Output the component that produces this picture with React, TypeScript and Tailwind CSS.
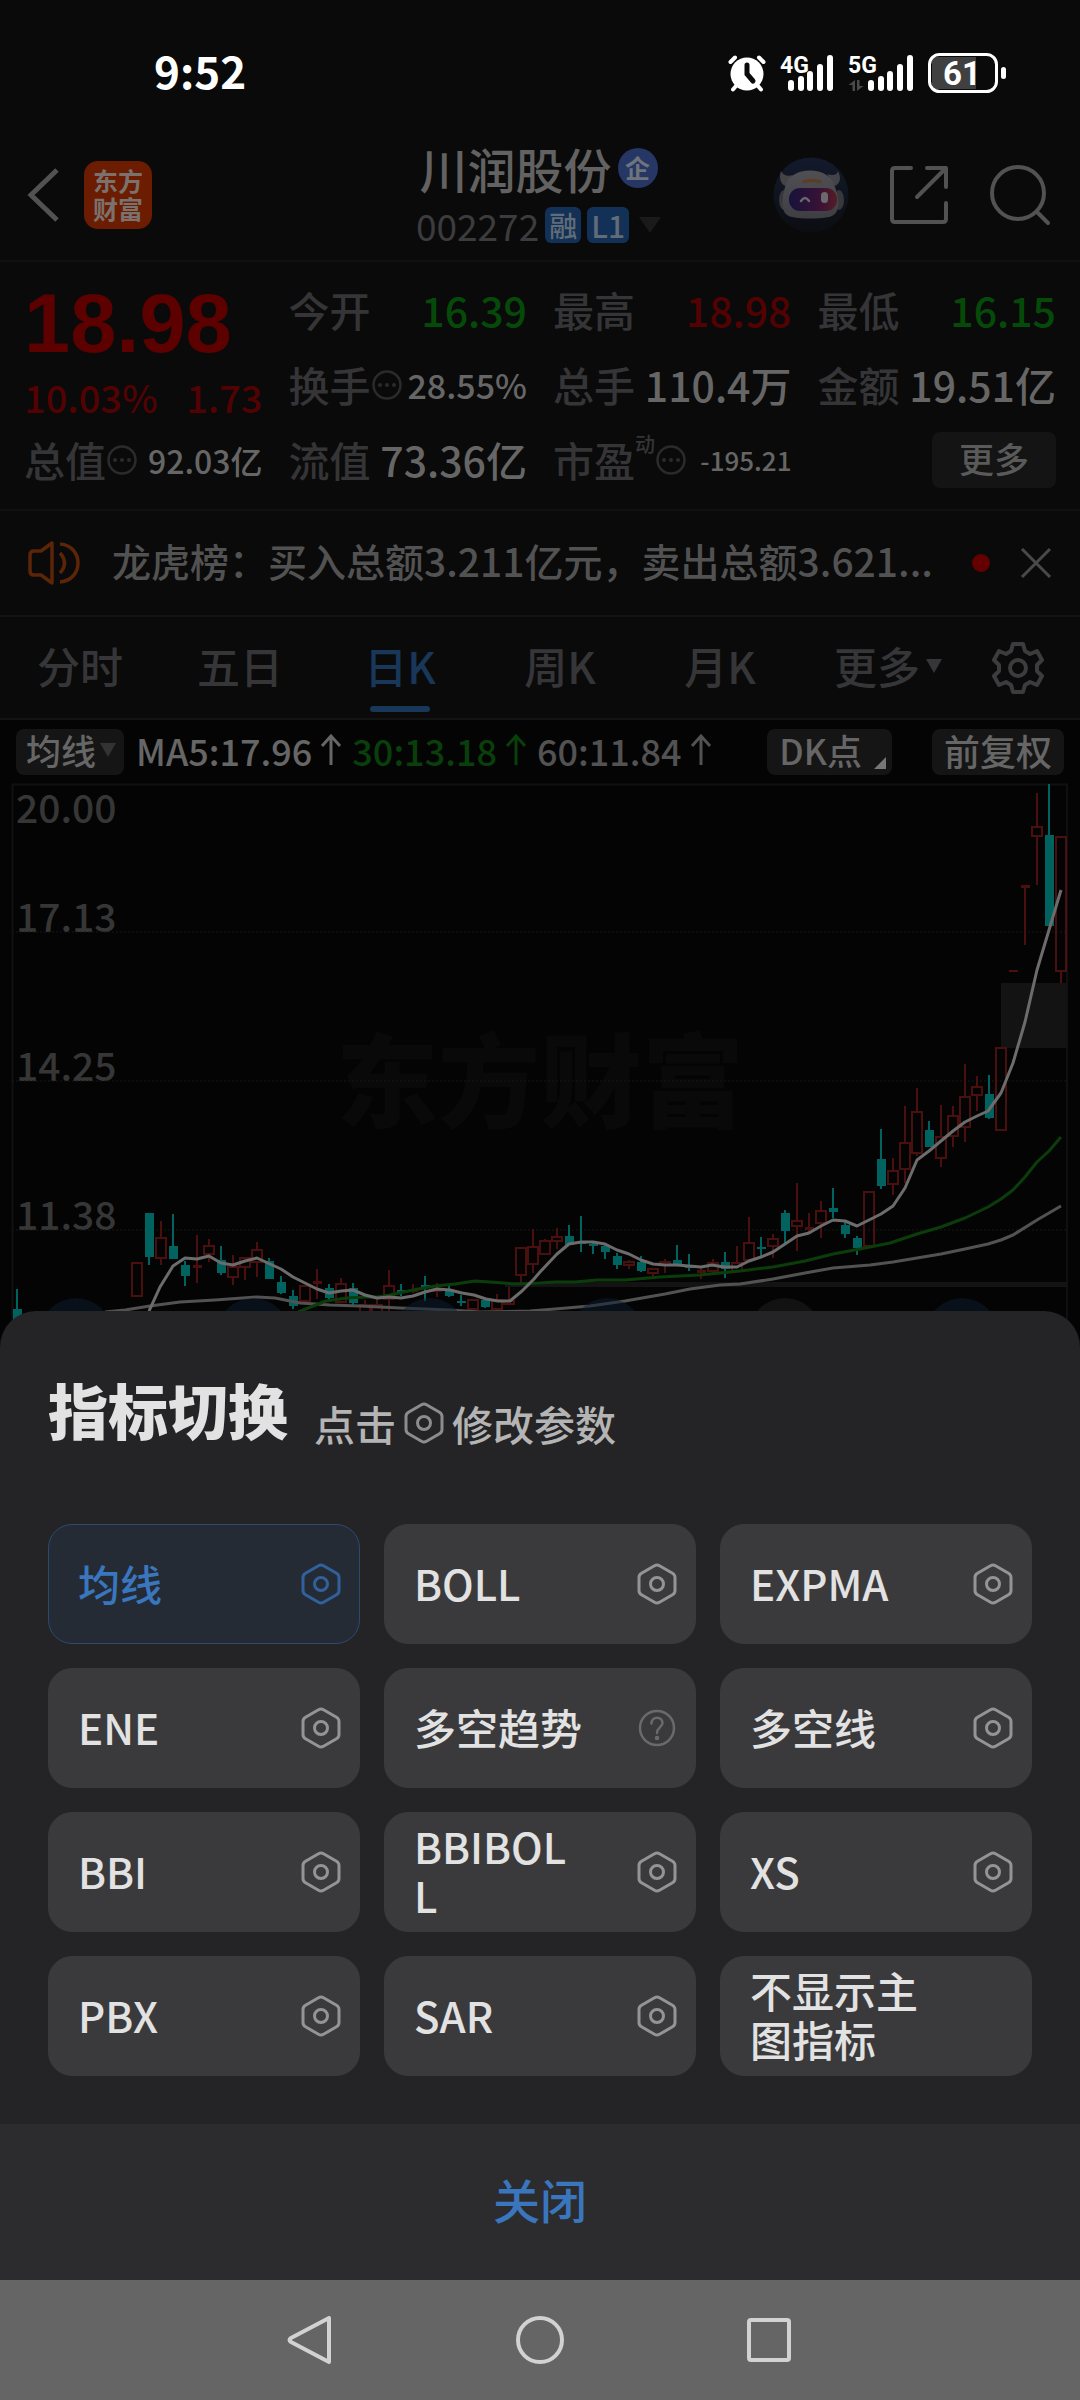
import React, { useState } from 'react';

type Candle = [number, 'up' | 'down', number, number, number, number];

interface Indicator {
  name: string;
  icon?: 'setting' | 'help';
}

// [index, direction, high, body top, body bottom, low]
const candles: Candle[] = [
  [0, 'down', 509, 529, 545, 545],
  [10, 'up', 482, 482, 517, 517],
  [11, 'down', 433, 433, 477, 485],
  [12, 'up', 441, 457, 479, 485],
  [13, 'down', 434, 466, 479, 479],
  [14, 'down', 481, 485, 496, 506],
  [15, 'up', 455, 485, 488, 503],
  [16, 'up', 459, 465, 475, 482],
  [17, 'down', 466, 480, 493, 495],
  [18, 'up', 475, 486, 498, 505],
  [19, 'up', 477, 477, 488, 500],
  [20, 'up', 462, 469, 483, 497],
  [21, 'down', 478, 481, 499, 499],
  [22, 'down', 496, 502, 513, 514],
  [23, 'down', 510, 516, 526, 529],
  [24, 'up', 505, 505, 522, 523],
  [25, 'up', 489, 501, 504, 519],
  [26, 'down', 504, 508, 518, 520],
  [27, 'up', 498, 503, 523, 523],
  [28, 'down', 503, 508, 523, 525],
  [29, 'up', 520, 524, 535, 535],
  [30, 'up', 518, 524, 535, 535],
  [31, 'up', 490, 505, 520, 532],
  [32, 'down', 504, 510, 512, 516],
  [33, 'up', 504, 509, 512, 513],
  [34, 'down', 496, 505, 507, 521],
  [35, 'up', 503, 510, 512, 517],
  [36, 'down', 505, 511, 516, 517],
  [37, 'down', 515, 521, 523, 526],
  [38, 'up', 519, 519, 530, 530],
  [39, 'down', 519, 520, 527, 528],
  [40, 'up', 514, 519, 530, 531],
  [41, 'up', 507, 520, 525, 525],
  [42, 'up', 467, 467, 496, 503],
  [43, 'up', 449, 466, 485, 493],
  [44, 'up', 459, 460, 475, 475],
  [45, 'up', 448, 456, 462, 469],
  [46, 'down', 445, 456, 465, 465],
  [47, 'down', 436, 461, 464, 472],
  [48, 'down', 462, 464, 466, 474],
  [49, 'down', 464, 466, 472, 479],
  [50, 'down', 473, 476, 485, 489],
  [51, 'up', 480, 481, 486, 489],
  [52, 'down', 476, 482, 491, 492],
  [53, 'up', 488, 488, 494, 496],
  [54, 'up', 479, 481, 486, 493],
  [55, 'down', 465, 480, 485, 486],
  [56, 'down', 474, 486, 488, 491],
  [57, 'up', 488, 490, 493, 499],
  [58, 'up', 479, 482, 492, 493],
  [59, 'down', 472, 482, 489, 498],
  [60, 'up', 466, 482, 492, 492],
  [61, 'up', 437, 462, 481, 481],
  [62, 'down', 457, 467, 469, 476],
  [63, 'up', 454, 458, 467, 478],
  [64, 'down', 430, 433, 451, 463],
  [65, 'up', 403, 440, 447, 471],
  [66, 'up', 433, 447, 450, 452],
  [67, 'up', 421, 430, 444, 458],
  [68, 'down', 408, 428, 432, 438],
  [69, 'down', 441, 445, 454, 458],
  [70, 'down', 456, 458, 468, 475],
  [71, 'up', 411, 411, 467, 467],
  [72, 'down', 349, 379, 406, 409],
  [73, 'up', 378, 390, 405, 415],
  [74, 'up', 326, 362, 390, 403],
  [75, 'up', 308, 331, 374, 376],
  [76, 'down', 341, 350, 367, 367],
  [77, 'up', 325, 356, 379, 387],
  [78, 'up', 326, 335, 357, 367],
  [79, 'up', 284, 316, 348, 362],
  [80, 'up', 296, 306, 316, 331],
  [81, 'down', 295, 314, 338, 339],
  [82, 'up', 267, 267, 351, 351],
  [83, 'up', 190, 190, 192, 192],
  [84, 'up', 105, 105, 108, 165],
  [85, 'up', 13, 46, 57, 105],
  [86, 'down', 4, 55, 146, 146],
  [87, 'up', 56, 56, 192, 203],
];

const ma5 =
  '149,531 160,507 173,486 185,478 197,479 209,476 221,483 233,485 245,481 257,478 270,484 281,489 293,497 305,503 317,509 329,513 341,511 353,510 365,515 377,518 389,517 401,518 413,516 425,512 437,509 450,510 462,513 474,515 486,519 498,521 510,521 522,511 534,499 540,492 557,474 569,464 581,462 593,462 605,464 617,470 629,474 641,480 653,484 665,485 677,485 689,486 701,487 712,485 724,487 737,487 749,481 761,477 773,472 785,464 797,456 809,453 821,446 833,440 845,441 857,446 869,440 881,434 893,426 905,408 917,380 929,371 941,361 953,351 965,342 977,336 988,331 1001,313 1013,283 1025,242 1037,190 1049,150 1061,110';
const ma30 =
  '298,532 326,521 347,518 365,517 377,517 390,515 413,510 435,506 455,504 475,501 490,502 515,504 540,503 555,502 575,502 597,500 625,500 660,497 700,495 740,491 773,487 805,481 833,474 860,469 890,463 917,454 941,447 965,438 988,427 1001,419 1013,410 1025,397 1037,382 1049,371 1061,357';
const ma60 =
  '105,532 125,530 150,526 180,522 215,520 257,517 275,518 300,523 330,525 360,526 400,528 450,530 480,532 530,531 555,529 590,526 625,521 665,514 690,509 720,505 740,504 773,499 805,493 833,488 870,485 893,482 917,478 941,474 965,469 988,464 1001,460 1013,455 1037,440 1061,426';

const gridLines = [
  { y: 152, label: '17.13' },
  { y: 301, label: '14.25' },
  { y: 450, label: '11.38' },
];

const markers = [76, 253, 430, 607, 785, 962];

const tabs = ['分时', '五日', '日K', '周K', '月K', '更多'];

const indicators: Indicator[] = [
  { name: '均线', icon: 'setting' },
  { name: 'BOLL', icon: 'setting' },
  { name: 'EXPMA', icon: 'setting' },
  { name: 'ENE', icon: 'setting' },
  { name: '多空趋势', icon: 'help' },
  { name: '多空线', icon: 'setting' },
  { name: 'BBI', icon: 'setting' },
  { name: 'BBIBOLL', icon: 'setting' },
  { name: 'XS', icon: 'setting' },
  { name: 'PBX', icon: 'setting' },
  { name: 'SAR', icon: 'setting' },
  { name: '不显示主图指标' },
];

const HexIcon = ({ className = '' }: { className?: string }) => (
  <svg viewBox="0 0 40 42" className={`h-[42px] w-10 shrink-0 ${className}`} fill="none" stroke="currentColor" strokeWidth="3">
    <path d="M17.5 2.7 Q20 1.3 22.5 2.7 L35.5 10.2 Q38 11.7 38 14.5 V27.5 Q38 30.3 35.5 31.8 L22.5 39.3 Q20 40.7 17.5 39.3 L4.5 31.8 Q2 30.3 2 27.5 V14.5 Q2 11.7 4.5 10.2 Z" />
    <circle cx="20" cy="21" r="6.5" />
  </svg>
);

const HelpIcon = () => (
  <svg viewBox="0 0 40 40" className="h-10 w-10 shrink-0 text-[#6a6a6b]" fill="none" stroke="currentColor" strokeWidth="2.5" strokeLinecap="round">
    <circle cx="20" cy="20" r="17" />
    <path d="M14.5 15.5 C14.5 8 25.5 8 25.5 15 C25.5 19 20 19.5 20 25" />
    <circle cx="20" cy="30" r="1" fill="currentColor" />
  </svg>
);

const DotsIcon = () => (
  <svg viewBox="0 0 32 32" className="h-8 w-8 shrink-0 text-[#2b2b2c]" fill="none" stroke="currentColor" strokeWidth="2.5">
    <circle cx="16" cy="16" r="13.5" />
    <g fill="currentColor" stroke="none">
      <circle cx="9" cy="16" r="2" />
      <circle cx="16" cy="16" r="2" />
      <circle cx="23" cy="16" r="2" />
    </g>
  </svg>
);

const SignalBars = ({ x }: { x: number }) => (
  <g transform={`translate(${x} 0)`}>
    <rect x="0" y="26" width="6" height="11" rx="3" />
    <rect x="10" y="22" width="6" height="15" rx="3" />
    <rect x="19" y="17" width="6" height="20" rx="3" />
    <rect x="29" y="10" width="6" height="27" rx="3" />
    <rect x="39" y="1" width="6" height="36" rx="3" />
  </g>
);

const StatusBar = () => (
  <div className="flex h-[130px] items-center justify-between pt-4 pr-[74px] pl-[154px] text-white">
    <span className="pb-1.5 text-[44px] leading-none font-bold">9:52</span>
    <div className="flex items-center gap-3.5">
      <svg viewBox="0 0 38 38" className="h-[38px] w-[38px]" fill="none" stroke="#fff" strokeWidth="5" strokeLinecap="round">
        <circle cx="19" cy="20" r="16.5" fill="#fff" stroke="none" />
        <path d="M2.5 8 L7 3.5 M35.5 8 L31 3.5" strokeWidth="4" />
        <path d="M8 32 L5 35.5 M30 32 L33 35.5" strokeWidth="4" />
        <path d="M19 11 V20 L25 27" stroke="#0a0a0a" />
      </svg>
      <svg viewBox="0 0 54 38" className="h-[38px] w-[54px] overflow-visible" fill="#fff">
        <text x="0" y="19" fontSize="23" fontWeight="700" fontFamily="Roboto">
          4G
        </text>
        <SignalBars x={8} />
      </svg>
      <svg viewBox="0 0 66 38" className="h-[38px] w-[66px] overflow-visible" fill="#fff">
        <text x="0" y="19" fontSize="23" fontWeight="700" fontFamily="Roboto">
          5G
        </text>
        <g fill="#4a4a4a">
          <path d="M7 26 V37 H4.5 V31 H0.5 Z" />
          <path d="M9 37 V26 H11.5 V32 H15.5 Z" />
        </g>
        <SignalBars x={20} />
      </svg>
      <svg viewBox="0 0 78 40" className="h-10 w-[78px] overflow-visible" fill="none">
        <rect x="4" y="4" width="44" height="32" fill="#404040" />
        <rect x="1.5" y="1.5" width="67" height="37" rx="10" stroke="#fff" strokeWidth="3" />
        <rect x="73" y="14" width="5" height="12" rx="2.5" fill="#fff" />
        <text x="34" y="32" fill="#fff" fontSize="33" fontWeight="700" textAnchor="middle" fontFamily="Roboto">
          61
        </text>
      </svg>
    </div>
  </div>
);

const Header = () => (
  <header className="flex h-[132px] items-center justify-between border-b-2 border-[#101010] pr-[29px] pl-[26px]">
    <div className="flex flex-1 items-center gap-6">
      <button aria-label="返回">
        <svg viewBox="0 0 34 56" className="h-14 w-[34px]" fill="none" stroke="#525252" strokeWidth="5">
          <path d="M31 3 L5 28 L31 53" />
        </svg>
      </button>
      <div className="flex h-[68px] w-[68px] items-center justify-center rounded-[14px] bg-[#6c1c00] pb-0.5 text-[25px] leading-[28px] font-bold text-[#7b716d]">
        <span className="w-[50px] break-all">东方财富</span>
      </div>
    </div>
    <div className="flex flex-col items-center">
      <h1 className="flex items-center gap-1.5 text-[48px] leading-[60px] font-medium text-[#626262]">
        川润股份
        <span className="flex h-10 w-10 items-center justify-center rounded-full bg-[#273765] pb-0.5 text-[25px] leading-none font-bold text-[#6f747c]">企</span>
      </h1>
      <div className="flex items-center gap-1.5 text-[37px] leading-[54px] text-[#3c3c3e]">
        002272
        <span className="rounded-md bg-[#133056] px-1 text-[28px] leading-[36px] font-medium text-[#616c79]">融</span>
        <span className="rounded-md bg-[#133056] px-1 text-[30px] leading-[36px] font-medium text-[#616c79]">L1</span>
        <svg viewBox="0 0 22 16" className="ml-1 h-4 w-[22px]">
          <path d="M0 0 H22 L11 16 Z" fill="#1a1a1a" />
        </svg>
      </div>
    </div>
    <div className="flex flex-1 items-center justify-end gap-10">
      <button aria-label="智能助手">
        <svg viewBox="0 0 76 76" className="h-[76px] w-[76px]">
          <defs>
            <linearGradient id="halo" x1="0" y1="0" x2="0" y2="1">
              <stop offset="0" stopColor="#131a2c" />
              <stop offset="1" stopColor="#0b0d11" />
            </linearGradient>
            <linearGradient id="visor" x1="0" y1="0" x2="1" y2="0">
              <stop offset="0" stopColor="#17133c" />
              <stop offset="0.6" stopColor="#371136" />
              <stop offset="1" stopColor="#551c26" />
            </linearGradient>
            <linearGradient id="shell" x1="0" y1="0" x2="0" y2="1">
              <stop offset="0" stopColor="#505054" />
              <stop offset="1" stopColor="#3e3e43" />
            </linearGradient>
          </defs>
          <circle cx="38" cy="38" r="37.5" fill="url(#halo)" />
          <path d="M8 14 C6 20 7 26 12 29 L20 18 C14 20 10 18 8 14 Z M65 14 C68 20 68 26 62 29 L54 17 C60 19 64 18 65 14 Z" fill="#434348" />
          <ellipse cx="11" cy="43" rx="5" ry="10" fill="#37373c" />
          <ellipse cx="66" cy="43" rx="5" ry="10" fill="#37373c" />
          <path d="M12 30 C16 8 58 8 62 30 C68 46 66 58 56 60 C44 62 30 62 19 60 C8 58 8 46 12 30 Z" fill="url(#shell)" />
          <rect x="16" y="31" width="48" height="23" rx="11" fill="url(#visor)" />
          <path d="M30 25 Q38 22 48 25" stroke="#5d3c22" strokeWidth="3" fill="none" />
          <path d="M28 44 Q32 38 36 44" stroke="#6a6a6a" strokeWidth="2.5" fill="none" strokeLinecap="round" />
          <rect x="48" y="35" width="7" height="11" rx="3.5" fill="#6a6a6e" />
        </svg>
      </button>
      <button aria-label="分享">
        <svg viewBox="0 0 60 60" className="h-[60px] w-[60px]" fill="none" stroke="#525252" strokeWidth="4" strokeLinecap="round" strokeLinejoin="round">
          <path d="M22 3 H6 Q3 3 3 6 V54 Q3 57 6 57 H54 Q57 57 57 54 V38" />
          <path d="M38 3 H57 V22 M56 4 L28 32" />
        </svg>
      </button>
      <button aria-label="搜索">
        <svg viewBox="0 0 62 62" className="h-[62px] w-[62px]" fill="none" stroke="#525252" strokeWidth="4" strokeLinecap="round">
          <circle cx="29" cy="29" r="26" />
          <path d="M48 48 L59 59" />
        </svg>
      </button>
    </div>
  </header>
);

interface QuoteCellProps {
  label: string;
  value: string;
  valueClass?: string;
  dots?: boolean;
  sup?: string;
}

const QuoteCell: React.FC<QuoteCellProps> = ({ label, value, valueClass = 'text-[41px] text-[#666]', dots, sup }) => (
  <div className="flex h-[75px] items-center justify-between whitespace-nowrap">
    <div className="flex items-center text-[41px] text-[#353537]">
      {label}
      {sup && <sup className="-top-4 text-[20px]">{sup}</sup>}
      {dots && <DotsIcon />}
    </div>
    <span className={valueClass}>{value}</span>
  </div>
);

const Quote = () => (
  <section className="grid grid-cols-4 gap-x-[26px] border-b-2 border-[#101010] px-6 pt-2.5 pb-3 leading-none font-medium">
    <div className="row-span-2 flex flex-col justify-between pt-2.5 pb-1.5">
      <strong className="font-['Liberation_Sans',sans-serif] text-[83px] font-bold text-[#5c0000]">18.98</strong>
      <div className="flex justify-between text-[38px] text-[#520202]">
        <span>10.03%</span>
        <span>1.73</span>
      </div>
    </div>
    <QuoteCell label="今开" value="16.39" valueClass="text-[41px] text-[#064a0a]" />
    <QuoteCell label="最高" value="18.98" valueClass="text-[41px] text-[#520202]" />
    <QuoteCell label="最低" value="16.15" valueClass="text-[41px] text-[#064a0a]" />
    <QuoteCell label="换手" value="28.55%" valueClass="text-[34px] text-[#666]" dots />
    <QuoteCell label="总手" value="110.4万" />
    <QuoteCell label="金额" value="19.51亿" />
    <QuoteCell label="总值" value="92.03亿" valueClass="text-[32px] text-[#666]" dots />
    <QuoteCell label="流值" value="73.36亿" />
    <QuoteCell label="市盈" value="-195.21" valueClass="text-[26px] text-[#666]" sup="动" dots />
    <div className="flex items-center justify-end">
      <button className="h-14 w-[124px] rounded-lg bg-[#141414] pb-1 text-[35px] text-[#5a5a5a]">更多</button>
    </div>
  </section>
);

const Notice = () => (
  <section className="flex h-[106px] items-center border-b-2 border-[#131313] px-[28px]">
    <svg viewBox="0 0 52 44" className="h-11 w-[52px] shrink-0" fill="none" stroke="#5c2507" strokeWidth="3.5">
      <path d="M24 2 L13 10 H6 Q2 10 2 14 V30 Q2 34 6 34 H13 L24 42 Z" strokeLinejoin="round" />
      <path d="M32 12 Q41 22 32 32 M32 3 C56 5 56 39 32 41" />
    </svg>
    <p className="ml-8 flex-1 truncate pb-1.5 text-[39px] font-medium text-[#525252]">龙虎榜：买入总额3.211亿元，卖出总额3.621...</p>
    <span className="mr-[30px] h-[18px] w-[18px] rounded-full bg-[#640000]" />
    <button aria-label="关闭公告">
      <svg viewBox="0 0 32 32" className="h-8 w-8" fill="none" stroke="#4a4a4a" strokeWidth="3">
        <path d="M2 2 L30 30 M30 2 L2 30" />
      </svg>
    </button>
  </section>
);

const Tabs = () => {
  const [active, setActive] = useState('日K');

  return (
    <nav className="flex h-[103px] items-center border-b-2 border-[#131313]">
      <div className="grid h-full flex-1 grid-cols-[repeat(5,10fr)_11fr]">
        {tabs.map((tab) => (
          <button
            key={tab}
            onClick={() => setActive(tab)}
            className={`relative flex items-center justify-center gap-1.5 pb-1 text-[43px] font-medium ${tab === active ? 'text-[#183759]' : 'text-[#363638]'}`}
          >
            {tab}
            {tab === '更多' && (
              <svg viewBox="0 0 16 14" className="h-3.5 w-4">
                <path d="M0 0 H16 L8 14 Z" fill="currentColor" />
              </svg>
            )}
            {tab === active && <span className="absolute bottom-1.5 h-1.5 w-[60px] rounded-full bg-[#183759]" />}
          </button>
        ))}
      </div>
      <button aria-label="设置" className="flex w-[104px] justify-center pr-5">
        <svg viewBox="0 0 52 52" className="h-[52px] w-[52px]" fill="none" stroke="#3c3c3e" strokeWidth="4" strokeLinejoin="round">
          <path d="M21 2 H31 L33 9 L38 12 L45 9 L50 18 L45 23 V29 L50 34 L45 43 L38 40 L33 43 L31 50 H21 L19 43 L14 40 L7 43 L2 34 L7 29 V23 L2 18 L7 9 L14 12 L19 9 Z" />
          <circle cx="26" cy="26" r="8" />
        </svg>
      </button>
    </nav>
  );
};

const Arrow = () => (
  <svg viewBox="0 0 22 32" className="mx-2 h-8 w-[22px]" fill="none" stroke="currentColor" strokeWidth="3">
    <path d="M11 31 V2 M2 12 L11 2 L20 12" />
  </svg>
);

const AverageBar = () => (
  <div className="flex h-[60px] items-center bg-[#040404] px-4 pt-1 text-[36px] leading-[42px] font-medium whitespace-nowrap">
    <button className="flex h-[46px] items-center gap-1 rounded-lg bg-[#151515] pr-2 pb-1 pl-2.5 text-[35px] text-[#666]">
      均线
      <svg viewBox="0 0 16 14" className="h-3.5 w-4">
        <path d="M0 0 H16 L8 14 Z" fill="#333" />
      </svg>
    </button>
    <div className="ml-3 flex flex-1 items-center gap-0.5 pb-1">
      <span className="flex items-center text-[#666]">
        MA5:17.96
        <Arrow />
      </span>
      <span className="flex items-center text-[#093f0a]">
        30:13.18
        <Arrow />
      </span>
      <span className="flex items-center text-[#525252]">
        60:11.84
        <Arrow />
      </span>
    </div>
    <button className="relative mr-10 h-[46px] rounded-lg bg-[#151515] pr-[30px] pb-1 pl-3 text-[35px] text-[#666]">
      DK点
      <svg viewBox="0 0 12 12" className="absolute right-1.5 bottom-1.5 h-3 w-3">
        <path d="M12 0 V12 H0 Z" fill="#777" />
      </svg>
    </button>
    <button className="h-[46px] rounded-lg bg-[#151515] px-3 pb-1 text-[36px] text-[#666]">前复权</button>
  </div>
);

const Chart = () => (
  <svg viewBox="0 0 1080 570" className="block w-full overflow-visible bg-[#040404]" fontFamily="Noto Sans CJK SC">
    <text x="540" y="340" textAnchor="middle" fontSize="102" fontWeight="900" fill="#090909">
      东方财富
    </text>
    <path d="M12.5 570 V4.5 H1067 V570" fill="none" stroke="#101010" strokeWidth="2" />
    <g fontSize="39" fontWeight="500" fill="#363636">
      <text x="16" y="43">20.00</text>
      {gridLines.map(({ y, label }) => (
        <text key={label} x="16" y={y}>
          {label}
        </text>
      ))}
    </g>
    {gridLines.map(({ y }) => (
      <path key={y} d={`M12 ${y} H1067`} stroke="#161616" strokeDasharray="2 2" />
    ))}
    <rect x="1001" y="203" width="66" height="65" fill="#131313" />
    <rect x="505" y="502" width="562" height="5" fill="#131313" />
    {candles.map(([index, direction, high, top, bottom, low]) => {
      const x = 17 + index * 12;
      const hollow = direction === 'up' && bottom - top > 4;
      const color = direction === 'up' ? '#4a1010' : '#006360';
      return (
        <g key={index}>
          <path d={`M${x} ${high} V${top} M${x} ${bottom} V${low}`} stroke={color} strokeWidth="2" />
          {hollow ? (
            <rect x={x - 5} y={top + 1} width="10" height={bottom - top - 2} fill="none" stroke={color} strokeWidth="2" />
          ) : (
            <rect x={x - 4} y={top} width="9" height={bottom - top} fill={color} />
          )}
        </g>
      );
    })}
    <g fill="none" strokeWidth="3" strokeLinejoin="round">
      <polyline points={ma60} stroke="#525252" />
      <polyline points={ma30} stroke="#0b3d0b" />
      <polyline points={ma5} stroke="#6c6c6c" />
    </g>
    {markers.map((x) => (
      <circle key={x} cx={x} cy="554" r="36" fill={x === 785 ? '#141414' : '#0c1b30'} fillOpacity={x === 785 ? 0.9 : 0.5} />
    ))}
  </svg>
);

const IndicatorSheet = () => {
  const [selected, setSelected] = useState('均线');

  return (
    <section className="relative -mt-[39px] flex flex-1 flex-col rounded-t-[36px] bg-[#242426] font-medium">
      <div className="flex items-end px-12 pt-[60px]">
        <h2 className="pb-1.5 text-[60px] leading-[76px] font-black text-[#e2e2e2]">指标切换</h2>
        <p className="ml-[26px] flex items-center gap-2 text-[41px] leading-[60px] text-[#b4b4b4]">
          点击
          <HexIcon className="text-[#8c8c8d]" />
          修改参数
        </p>
      </div>
      <div className="mt-[71px] grid grid-cols-3 gap-6 px-12">
        {indicators.map(({ name, icon }) => (
          <button
            key={name}
            onClick={() => setSelected(name)}
            className={`flex h-[120px] items-center justify-between rounded-3xl border pr-[18px] pl-[29px] text-left text-[42px] leading-[49px] ${
              name === selected ? 'border-[#2c4a70] bg-[#242b35] text-[#3a76bd]' : 'border-[#3a3a3c] bg-[#3a3a3c] text-[#e2e2e2]'
            }`}
          >
            <span className="w-[170px] pb-1 break-all">{name}</span>
            {icon === 'setting' && <HexIcon className={name === selected ? 'text-[#31619b]' : 'text-[#949495]'} />}
            {icon === 'help' && <HelpIcon />}
          </button>
        ))}
      </div>
      <button className="mt-12 h-[156px] w-full bg-[#2c2c2e] pb-1.5 text-[47px] text-[#3a76bd]">关闭</button>
    </section>
  );
};

const SystemNav = () => (
  <footer className="flex h-[120px] items-center justify-center gap-[182px] bg-[#656565]">
    <button aria-label="系统返回">
      <svg viewBox="0 0 48 48" className="h-12 w-12" fill="none" stroke="#d2d2d2" strokeWidth="4" strokeLinejoin="round">
        <path d="M43 2 V46 L5 26 Q2 24 5 22 Z" />
      </svg>
    </button>
    <button aria-label="主屏幕">
      <svg viewBox="0 0 48 48" className="h-12 w-12" fill="none" stroke="#d2d2d2" strokeWidth="4">
        <circle cx="24" cy="24" r="22" />
      </svg>
    </button>
    <button aria-label="最近任务">
      <svg viewBox="0 0 48 48" className="h-12 w-12" fill="none" stroke="#d2d2d2" strokeWidth="4">
        <rect x="3" y="4" width="40" height="40" rx="2" />
      </svg>
    </button>
  </footer>
);

const App: React.FC = () => {
  return (
    <div className="flex min-h-screen flex-col bg-[#0a0a0a] font-['Noto_Sans_CJK_SC',sans-serif]">
      <StatusBar />
      <Header />
      <Quote />
      <Notice />
      <Tabs />
      <AverageBar />
      <Chart />
      <IndicatorSheet />
      <SystemNav />
    </div>
  );
};

export default App;
